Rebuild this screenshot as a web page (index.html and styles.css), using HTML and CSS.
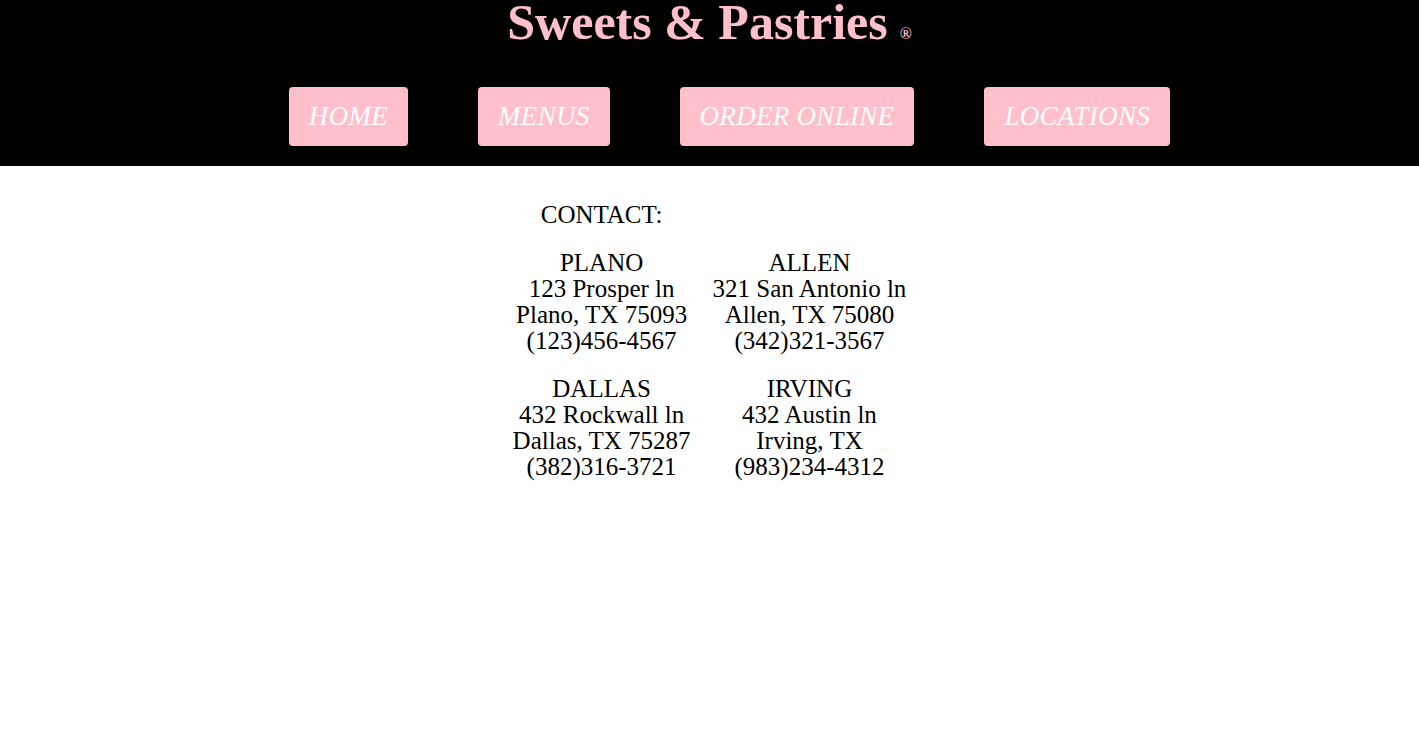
FILE: index.html
```html
<!DOCTYPE html>
<html>
<head>
<meta charset="utf-8">
<title>Sweets &amp; Pastries</title>
<link rel="stylesheet" href="styles.css">
</head>
<body>
<header class="site-header">
  <h1 class="brand">Sweets &amp; Pastries<span class="reg">&reg;</span></h1>
  <nav class="nav">
    <a class="nav-btn" href="#">HOME</a>
    <a class="nav-btn" href="#">MENUS</a>
    <a class="nav-btn" href="#">ORDER ONLINE</a>
    <a class="nav-btn" href="#">LOCATIONS</a>
  </nav>
</header>
<main class="content">
  <table class="contact">
    <tr><td>CONTACT:</td><td></td></tr>
    <tr>
      <td>PLANO<br>123 Prosper ln<br>Plano, TX 75093<br>(123)456-4567</td>
      <td>ALLEN<br>321 San Antonio ln<br>Allen, TX 75080<br>(342)321-3567</td>
    </tr>
    <tr>
      <td>DALLAS<br>432 Rockwall ln<br>Dallas, TX 75287<br>(382)316-3721</td>
      <td>IRVING<br>432 Austin ln<br>Irving, TX<br>(983)234-4312</td>
    </tr>
  </table>
</main>
</body>
</html>
```
FILE: styles.css
```css
html, body {
  margin: 0;
  padding: 0;
  background: #ffffff;
  font-family: "Liberation Serif", "Times New Roman", serif;
}

.site-header {
  background: #000000;
  height: 166px;
  overflow: hidden;
  display: flex;
  flex-direction: column;
}

.brand {
  margin: 0;
  text-align: center;
  color: #ffc0cb;
  font-family: "Liberation Serif", "Times New Roman", serif;
  font-weight: bold;
  font-size: 50px;
  line-height: 45px;
}

.reg {
  font-size: 16px;
  margin-left: 12px;
  vertical-align: baseline;
}

.nav {
  display: flex;
  justify-content: center;
  gap: 70px;
  padding-left: 40px;
  margin-top: 31px;
}

.nav-btn {
  display: block;
  background: #ffc0cb;
  color: #ffffff;
  text-decoration: none;
  font-family: "Liberation Serif", "Times New Roman", serif;
  font-style: italic;
  font-size: 27px;
  line-height: 29px;
  letter-spacing: 0.3px;
  padding: 15px 20px;
  border-radius: 4px;
}

.content {
  padding-top: 24px;
}

.contact {
  margin: 0 auto;
  border-spacing: 2px;
  font-size: 25px;
  line-height: 26px;
  color: #000000;
}

.contact td {
  padding: 10px;
  text-align: center;
  vertical-align: top;
}
```
